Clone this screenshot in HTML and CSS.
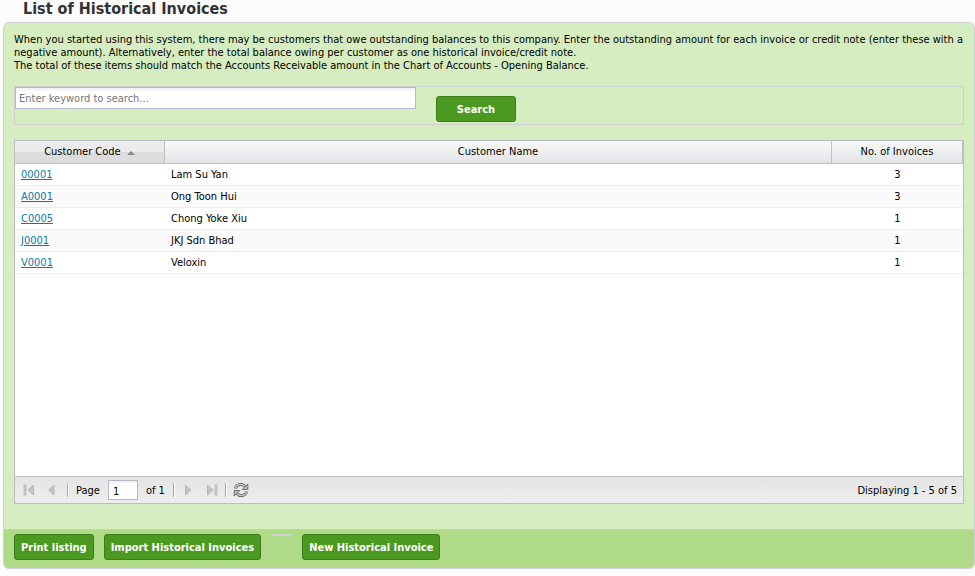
FILE: index.html
```
<!DOCTYPE html>
<html lang="en">
<head>
    <meta charset="UTF-8">
    <meta name="viewport" content="width=device-width, initial-scale=1.0">
    <title>List of Historical Invoices</title>
    <link rel="stylesheet" href="styles.css">
</head>
<body>
    <h1 class="page-title">List of Historical Invoices</h1>

    <div class="panel">
        <div class="panel-body">
            <p class="intro">
                When you started using this system, there may be customers that owe outstanding balances to this company. Enter the outstanding amount for each invoice or credit note (enter these with a negative amount). Alternatively, enter the total balance owing per customer as one historical invoice/credit note.<br>
                The total of these items should match the Accounts Receivable amount in the Chart of Accounts - Opening Balance.
            </p>

            <form class="search" onsubmit="return false">
                <input type="text" class="search-input" placeholder="Enter keyword to search..." aria-label="Enter keyword to search">
                <button type="submit" class="btn btn-search">Search</button>
            </form>

            <div class="grid">
                <div class="grid-view">
                    <table class="grid-table">
                        <thead>
                            <tr>
                                <th class="col-code sorted">Customer Code <span class="sort-asc"></span></th>
                                <th>Customer Name</th>
                                <th class="col-count">No. of Invoices</th>
                            </tr>
                        </thead>
                        <tbody>
                            <tr>
                                <td><a href="#">00001</a></td>
                                <td>Lam Su Yan</td>
                                <td class="count">3</td>
                            </tr>
                            <tr>
                                <td><a href="#">A0001</a></td>
                                <td>Ong Toon Hui</td>
                                <td class="count">3</td>
                            </tr>
                            <tr>
                                <td><a href="#">C0005</a></td>
                                <td>Chong Yoke Xiu</td>
                                <td class="count">1</td>
                            </tr>
                            <tr>
                                <td><a href="#">J0001</a></td>
                                <td>JKJ Sdn Bhad</td>
                                <td class="count">1</td>
                            </tr>
                            <tr>
                                <td><a href="#">V0001</a></td>
                                <td>Veloxin</td>
                                <td class="count">1</td>
                            </tr>
                        </tbody>
                    </table>
                </div>

                <div class="pager">
                    <button class="pager-btn" aria-label="First page">
                        <svg width="12" height="12" viewBox="0 0 12 12">
                            <rect x="1" y="1" width="2" height="10" fill="#d4d4d4" stroke="#aaa" stroke-width=".7"/>
                            <path d="M10.500 1v10L5 6z" fill="#c4c4c4" stroke="#b0b0b0" stroke-width=".8"/>
                        </svg>
                    </button>
                    <button class="pager-btn" aria-label="Previous page">
                        <svg width="12" height="12" viewBox="0 0 12 12">
                            <path d="M9 1v10L3.500 6z" fill="#c4c4c4" stroke="#b0b0b0" stroke-width=".8"/>
                        </svg>
                    </button>
                    <span class="pager-sep"></span>
                    <label for="page">Page</label>
                    <input type="text" id="page" class="page-input" value="1">
                    <span class="page-total">of 1</span>
                    <span class="pager-sep"></span>
                    <button class="pager-btn" aria-label="Next page">
                        <svg width="12" height="12" viewBox="0 0 12 12">
                            <path d="M3.500 1v10L9 6z" fill="#c4c4c4" stroke="#b0b0b0" stroke-width=".8"/>
                        </svg>
                    </button>
                    <button class="pager-btn" aria-label="Last page">
                        <svg width="12" height="12" viewBox="0 0 12 12">
                            <path d="M1.500 1v10L7 6z" fill="#c4c4c4" stroke="#b0b0b0" stroke-width=".8"/>
                            <rect x="9" y="1" width="2" height="10" fill="#d4d4d4" stroke="#aaa" stroke-width=".7"/>
                        </svg>
                    </button>
                    <span class="pager-sep"></span>
                    <button class="pager-btn refresh" aria-label="Refresh">
                        <svg width="16" height="16" viewBox="0 0 16 16" fill="none" stroke-linejoin="round">
                            <path d="M2.500 6.500C3.500 2 9 .8 12 4.500" stroke="#666" stroke-width="3"/>
                            <path d="M2.500 6.500C3.500 2 9 .8 12 4.500" stroke="#ccc" stroke-width="1.200"/>
                            <path d="M14.800 2v5.500H9.300z" fill="#bbb" stroke="#666" stroke-width=".9"/>
                            <path d="M13.500 9.500C12.500 14 7 15.200 4 11.500" stroke="#666" stroke-width="3"/>
                            <path d="M13.500 9.500C12.500 14 7 15.200 4 11.500" stroke="#ccc" stroke-width="1.200"/>
                            <path d="M1.200 14v-5.500h5.500z" fill="#bbb" stroke="#666" stroke-width=".9"/>
                        </svg>
                    </button>
                    <span class="pager-info">Displaying 1 - 5 of 5</span>
                </div>
            </div>
        </div>

        <div class="panel-footer">
            <button class="btn">Print listing</button>
            <button class="btn">Import Historical Invoices</button>
            <span class="footer-rule"></span>
            <button class="btn">New Historical Invoice</button>
        </div>
    </div>
</body>
</html>
```

FILE: styles.css
```
* {
    box-sizing: border-box;
}
body {
    margin: 0;
    padding: 0 0 6px 3px;
    background-color: #fbfbfb;
    font-family: "DejaVu Sans Condensed", Tahoma, sans-serif;
    font-size: 11px;
    line-height: 13px;
    color: #000;
}
button, input {
    font-family: inherit;
    font-size: inherit;
}
.page-title {
    margin: 0;
    padding: 0 20px 4px;
    font-size: 16px;
    line-height: 18px;
    color: #333;
}
.panel {
    border: 1px solid #cfcfd4;
    border-radius: 6px;
    background-color: #d6edc1;
    overflow: hidden;
}
.panel-body {
    padding: 10px 10px 25px;
}
.intro {
    margin: 0 0 14px;
}
.search {
    display: flex;
    align-items: flex-start;
    gap: 20px;
    border: 1px solid #cfcfcf;
    margin-bottom: 15px;
}
.search-input {
    width: 401px;
    height: 22px;
    padding: 1px 3px;
    border: 1px solid #b5b8c8;
    background: linear-gradient(#eee, #fff 4px);
}
.search-input::placeholder {
    color: #777;
    opacity: 1;
}
.btn {
    height: 26px;
    padding: 0 6px;
    border: 1px solid #3c7d1a;
    border-radius: 3px;
    background-color: #4b9920;
    color: #fff;
    font-weight: bold;
    cursor: pointer;
}
.btn-search {
    width: 80px;
    margin: 9px 0 2px;
}
.grid {
    border: 1px solid #babac8;
    background-color: #fff;
}
.grid-view {
    min-height: 335px;
}
.grid-table {
    width: 100%;
    border-collapse: separate;
    border-spacing: 0;
    table-layout: fixed;
}
.grid-table th {
    height: 23px;
    padding: 0 6px 1px;
    border-right: 1px solid #c0c0c8;
    border-bottom: 1px solid #c0c0cc;
    background: linear-gradient(#f9f9f9, #e3e4e6);
    font-weight: normal;
}
.grid-table th.sorted {
    background: linear-gradient(#ebebeb 50%, #dcdcdc 50%);
}
.col-code {
    width: 150px;
}
.col-count {
    width: 131px;
}
.sort-asc {
    display: inline-block;
    margin-left: 3px;
    border: 4px solid transparent;
    border-top: 0;
    border-bottom-color: #888;
}
.grid-table td {
    height: 22px;
    padding: 0 6px;
    border-bottom: 1px solid #ededed;
}
.grid-table tbody tr:nth-child(even) {
    background-color: #fafafa;
}
.grid-table td.count {
    text-align: center;
}
.grid-table a {
    color: #0a7ba3;
}
.pager {
    display: flex;
    align-items: center;
    height: 27px;
    padding: 0 6px;
    border-top: 1px solid #babac8;
    background: linear-gradient(#e4e4e4, #eee);
}
.pager-btn {
    display: flex;
    align-items: center;
    justify-content: center;
    width: 24px;
    height: 20px;
    padding: 0;
    border: 0;
    background: none;
}
.pager-btn:first-child {
    width: 16px;
    margin-right: 2px;
}
.refresh {
    width: 26px;
}
.pager-sep {
    width: 2px;
    height: 14px;
    margin: 0 7px 0 4px;
    border-left: 1px solid #aaa;
    border-right: 1px solid #fff;
}
.pager-sep:has(+ .pager-btn) {
    margin: 0 1px;
}
.page-input {
    width: 30px;
    height: 20px;
    margin: 0 8px;
    padding: 2px 4px 0;
    border: 1px solid #b5b8c8;
    background: linear-gradient(#eee, #fff 4px);
}
.page-total {
    margin-right: 7px;
}
.pager-info {
    margin-left: auto;
}
.panel-footer {
    display: flex;
    align-items: flex-start;
    gap: 10px;
    padding: 4px 10px 8px;
    border-top: 1px solid #c6cfc0;
    background-color: #afda88;
}
.footer-rule {
    width: 21px;
    height: 2px;
    background-color: #cfcfd4;
}
```
